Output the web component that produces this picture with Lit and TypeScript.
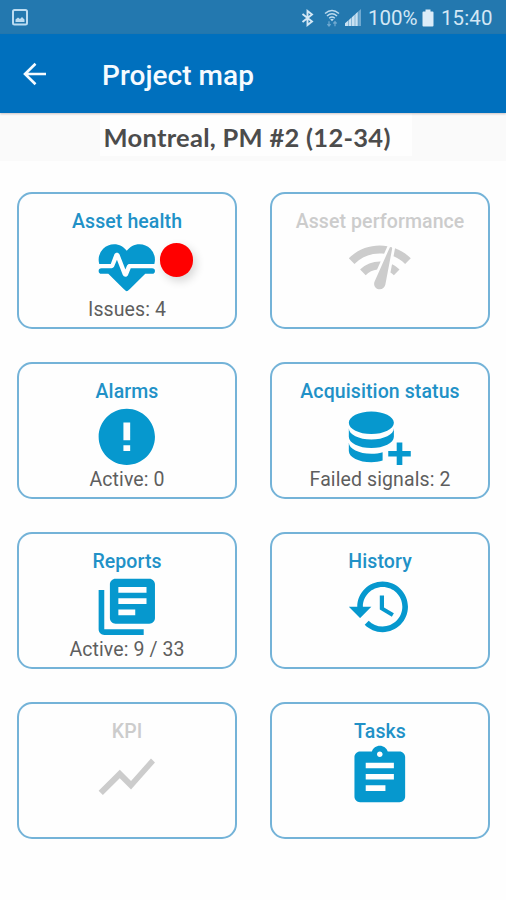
import { LitElement, html, css, svg, nothing } from "lit";
import { customElement, property } from "lit/decorators.js";

const ICONS: Record<string, string> = {
  heart:
    "M7.5,4A5.5,5.5 0 0,0 2,9.5C2,10 2.09,10.5 2.22,11H6.3L7.57,7.63C7.87,6.83 9.05,6.75 9.43,7.63L11.5,13L12.09,11.58C12.22,11.25 12.57,11 13,11H21.78C21.91,10.5 22,10 22,9.5A5.5,5.5 0 0,0 16.5,4C14.64,4 13,4.93 12,6.34C11,4.93 9.36,4 7.5,4M3,12.5A1,1 0 0,0 2,13.5A1,1 0 0,0 3,14.5H5.44L11,20C12,20.9 12,20.9 13,20L18.56,14.5H21A1,1 0 0,0 22,13.5A1,1 0 0,0 21,12.5H13.4L12.47,14.8C12.07,15.81 10.92,15.67 10.55,14.83L8.5,9.5L7.54,11.83C7.39,12.21 7.05,12.5 6.6,12.5H3Z",
  gauge:
    "M15.9 5c-.17 0-.32.09-.41.23l-.07.15-5.18 11.65c-.16.29-.26.61-.26.96 0 1.11.9 2.01 2.01 2.01.96 0 1.77-.68 1.96-1.59l.01-.03L16.4 5.5c0-.28-.22-.5-.5-.5zM1 9l2 2c2.88-2.88 6.79-4.08 10.53-3.62l1.19-2.68C9.89 3.84 4.74 5.27 1 9zm20 2l2-2c-1.64-1.64-3.55-2.82-5.59-3.57l-.53 2.82c1.5.62 2.9 1.53 4.12 2.75zm-4 4l2-2c-.8-.8-1.7-1.42-2.66-1.89l-.55 2.92c.42.27.83.59 1.21.97zM5 13l2 2c1.13-1.13 2.56-1.79 4.03-2l1.28-2.88c-2.63-.08-5.3.87-7.31 2.88z",
  alert:
    "M12 2C6.48 2 2 6.48 2 12s4.48 10 10 10 10-4.48 10-10S17.52 2 12 2zm1.2 15h-2.4v-2h2.4v2zm0-3.8h-2.4V6.9h2.4v6.3z",
  database:
    "M9,3C4.58,3 1,4.79 1,7C1,9.21 4.58,11 9,11C13.42,11 17,9.21 17,7C17,4.79 13.42,3 9,3M1,9V12C1,14.21 4.58,16 9,16C13.42,16 17,14.21 17,12V9C17,11.21 13.42,13 9,13C4.58,13 1,11.21 1,9M1,14V17C1,19.21 4.58,21 9,21C10.41,21 11.79,20.81 13,20.46V17.46C11.79,17.81 10.41,18 9,18C4.58,18 1,16.21 1,14M18,14V17H15V19H18V22H20V19H23V17H20V14",
  library:
    "M4 6H2v14c0 1.1.9 2 2 2h14v-2H4V6zm16-4H8c-1.1 0-2 .9-2 2v12c0 1.1.9 2 2 2h12c1.1 0 2-.9 2-2V4c0-1.1-.9-2-2-2zm-1 9H9V9h10v2zm-4 4H9v-2h6v2zm4-8H9V5h10v2z",
  history:
    "M13 3c-4.97 0-9 4.03-9 9H1l3.89 3.89.07.14L9 12H6c0-3.87 3.13-7 7-7s7 3.13 7 7-3.13 7-7 7c-1.93 0-3.68-.79-4.94-2.06l-1.42 1.42C8.27 19.99 10.51 21 13 21c4.97 0 9-4.03 9-9s-4.03-9-9-9zm-1 5v5l4.28 2.54.72-1.21-3.5-2.08V8H12z",
  chart: "M3.5 18.49l6-6.01 4 4L22 6.92l-1.41-1.41-7.09 7.97-4-4L2 16.99z",
  clipboard:
    "M19 3h-4.18C14.4 1.84 13.3 1 12 1c-1.3 0-2.4.84-2.82 2H5c-1.1 0-2 .9-2 2v14c0 1.1.9 2 2 2h14c1.1 0 2-.9 2-2V5c0-1.1-.9-2-2-2zm-7 0c.55 0 1 .45 1 1s-.45 1-1 1-1-.45-1-1 .45-1 1-1zm2 14H7v-2h7v2zm3-4H7v-2h10v2zm0-4H7V7h10v2z",
};

interface Tile {
  label: string;
  icon: string;
  note?: string;
  disabled?: boolean;
  dot?: boolean;
}

const TILES: Tile[] = [
  { label: "Asset health", icon: "heart", note: "Issues: 4", dot: true },
  { label: "Asset performance", icon: "gauge", disabled: true },
  { label: "Alarms", icon: "alert", note: "Active: 0" },
  { label: "Acquisition status", icon: "database", note: "Failed signals: 2" },
  { label: "Reports", icon: "library", note: "Active: 9 / 33" },
  { label: "History", icon: "history" },
  { label: "KPI", icon: "chart", disabled: true },
  { label: "Tasks", icon: "clipboard" },
];

@customElement("map-tile")
class MapTile extends LitElement {
  @property({ attribute: false }) tile!: Tile;

  static styles = css`
    :host {
      display: block;
    }
    .card {
      box-sizing: border-box;
      height: 136.5px;
      border: 2px solid #74b3d8;
      border-radius: 15px;
      padding-top: 15.6px;
      display: flex;
      flex-direction: column;
      align-items: center;
      background: #fefefe;
      color: #0698ce;
    }
    .label {
      font-size: 19.5px;
      line-height: 24px;
      font-weight: 500;
      letter-spacing: 0.1px;
      color: #2191c7;
      white-space: nowrap;
    }
    .off,
    .off .label {
      color: #cccccc;
    }
    .icon {
      position: relative;
      width: 67.6px;
      height: 67.6px;
      margin-top: -1.1px;
    }
    .icon svg {
      display: block;
      width: 67.6px;
      height: 67.6px;
      fill: currentColor;
    }
    .dot {
      position: absolute;
      left: 66.6px;
      top: 10.6px;
      width: 33.5px;
      height: 33.5px;
      border-radius: 50%;
      background: #ff0000;
      box-shadow: 3px 4px 10px rgba(0, 0, 0, 0.16);
    }
    .note {
      margin-top: -2.6px;
      font-size: 19.5px;
      line-height: 24px;
      letter-spacing: 0.1px;
      color: #5e5e5e;
      white-space: nowrap;
    }
  `;

  render() {
    const t = this.tile;
    return html`<div class="card ${t.disabled ? "off" : ""}">
      <div class="label">${t.label}</div>
      <div class="icon">
        <svg viewBox="0 0 24 24">${svg`<path d=${ICONS[t.icon]}></path>`}</svg>
        ${t.dot ? html`<span class="dot"></span>` : nothing}
      </div>
      ${t.note ? html`<div class="note">${t.note}</div>` : nothing}
    </div>`;
  }
}

@customElement("app-root")
class AppRoot extends LitElement {
  static styles = css`
    :host {
      display: block;
      height: 900px;
      overflow: hidden;
      background: #fefefe;
      font-family: Roboto, "Liberation Sans", sans-serif;
    }
    .status {
      box-sizing: border-box;
      height: 34px;
      padding: 2px 12px 0 11px;
      display: flex;
      align-items: center;
      background: #2378af;
      color: #d3e7f5;
      font-size: 20.5px;
    }
    .status svg {
      display: block;
      flex: none;
    }
    .spacer {
      flex: 1;
    }
    .bt {
      margin-right: 10px;
    }
    .wifi {
      margin-right: 4px;
    }
    .signal {
      margin-right: 6px;
    }
    .pct {
      width: 51px;
      white-space: nowrap;
    }
    .battery {
      margin: 0 7px 0 3px;
    }
    .clock {
      width: 53px;
      white-space: nowrap;
      letter-spacing: 0.1px;
    }
    .bar {
      box-sizing: border-box;
      height: 79px;
      padding-left: 23px;
      display: flex;
      align-items: center;
      background: #0070be;
      color: #f6fbff;
      box-shadow: 0 1px 2px rgba(60, 20, 20, 0.25);
      position: relative;
    }
    .title {
      margin-left: 55px;
      padding-top: 3px;
      font-size: 28px;
      font-weight: 500;
      letter-spacing: 0.05px;
    }
    .site {
      height: 48px;
      background: #fafafa;
      display: flex;
    }
    .name {
      margin-left: 100px;
      width: 308px;
      height: 43px;
      padding-left: 3.5px;
      background: #fefefe;
      color: #4c4c4c;
      font: 700 25.5px/48px Lato, "Open Sans", sans-serif;
      letter-spacing: 0.28px;
      white-space: nowrap;
    }
    .grid {
      display: grid;
      grid-template-columns: 219.5px 219.5px;
      column-gap: 33.5px;
      row-gap: 33.5px;
      padding: 31px 0 0 17.3px;
    }
  `;

  render() {
    return html`
      <div class="status">
        <svg width="18" height="18" viewBox="0 0 18 18">
          <rect x="2" y="1" width="14" height="14.5" rx="1.5" fill="none" stroke="#bcdcf1" stroke-width="2"></rect>
          <path d="M4.5 13V10.5L7 8.5L9 10L11 8L13.5 10.5V13Z" fill="#bcdcf1"></path>
        </svg>
        <span class="spacer"></span>
        <svg class="bt" width="13" height="18" viewBox="0 0 13 18">
          <path d="M1.5 5L11 12.5L6.5 16V2L11 5.5L1.5 13" fill="none" stroke="#d3e7f5" stroke-width="1.9"></path>
        </svg>
        <svg class="wifi" width="16" height="18" viewBox="0 0 16 18">
          <g fill="none" stroke="#bcdaee" stroke-width="1.5">
            <path d="M1 4.5Q8 -1.5 15 4.5"></path>
            <path d="M3 7Q8 2.5 13 7"></path>
            <path d="M5.2 9.3Q8 6.8 10.8 9.3"></path>
          </g>
          <path d="M6.2 10.3L8 12.2L9.8 10.3Q8 9 6.2 10.3Z" fill="#bcdaee"></path>
          <path d="M5 12.3V17M3.4 15.2L5 17L6.6 15.2M11 17.3V12.7M9.4 14.5L11 12.7L12.6 14.5" fill="none" stroke="#70a9d0" stroke-width="1.2"></path>
        </svg>
        <svg class="signal" width="18" height="18" viewBox="0 0 18 18">
          <path d="M1 17V14.3L4.2 11.5V17ZM4.6 17V11.2L7.5 8.5V17ZM7.9 17V8.2L10.8 5.5V17ZM11.2 17V5.2L13.8 2.8V17Z" fill="#c9e1f2"></path>
          <path d="M14.2 17V2.5L17 0V17Z" fill="#70a9d0"></path>
        </svg>
        <span class="pct">100%</span>
        <svg class="battery" width="12" height="18" viewBox="0 0 12 18">
          <path d="M3.5 0.5H8.5V2.5H10.5Q11.5 2.5 11.5 3.5V16.5Q11.5 17.5 10.5 17.5H1.5Q.5 17.5 .5 16.5V3.5Q.5 2.5 1.5 2.5H3.5Z" fill="#dcecf8"></path>
        </svg>
        <span class="clock">15:40</span>
      </div>
      <div class="bar">
        <svg width="24" height="24" viewBox="0 0 24 24">
          <path d="M23 12H2M12.5 1.7L2 12L12.5 22.3" fill="none" stroke="#f6fbff" stroke-width="2.6"></path>
        </svg>
        <span class="title">Project map</span>
      </div>
      <div class="site"><div class="name">Montreal, PM #2 (12-34)</div></div>
      <div class="grid">${TILES.map((t) => html`<map-tile .tile=${t}></map-tile>`)}</div>
    `;
  }
}
